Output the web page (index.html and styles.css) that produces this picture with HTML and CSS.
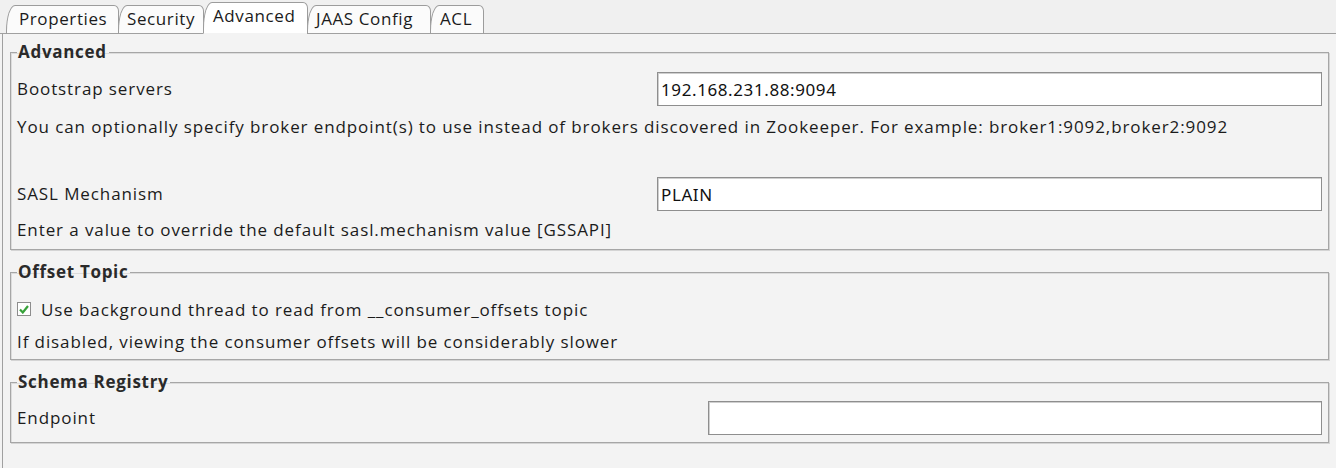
FILE: index.html
```html
<!DOCTYPE html>
<html>
<head>
<meta charset="utf-8">
<link rel="stylesheet" href="styles.css">
</head>
<body>
<div class="window">
  <div class="tabs">
    <div class="tab tab-properties">Properties</div>
    <div class="tab tab-security">Security</div>
    <div class="tab tab-advanced selected">Advanced</div>
    <div class="tab tab-jaas">JAAS Config</div>
    <div class="tab tab-acl">ACL</div>
  </div>
  <div class="panel">
    <fieldset class="group group-advanced">
      <legend>Advanced</legend>
      <div class="field-row row-bootstrap">
        <span class="label">Bootstrap servers</span>
        <div class="input input-wide">192.168.231.88:9094</div>
      </div>
      <div class="help help-bootstrap">You can optionally specify broker endpoint(s) to use instead of brokers discovered in Zookeeper. For example: broker1:9092,broker2:9092</div>
      <div class="field-row row-sasl">
        <span class="label">SASL Mechanism</span>
        <div class="input input-wide">PLAIN</div>
      </div>
      <div class="help help-sasl">Enter a value to override the default sasl.mechanism value [GSSAPI]</div>
    </fieldset>
    <fieldset class="group group-offset">
      <legend>Offset Topic</legend>
      <div class="check-row">
        <span class="checkbox"><svg width="10" height="9" viewBox="0 0 10 9"><path d="M1 4.5 L3.8 7.5 L9 1" fill="none" stroke="#37a23a" stroke-width="2.2"/></svg></span>
        <span class="check-label">Use background thread to read from __consumer_offsets topic</span>
      </div>
      <div class="help help-offset">If disabled, viewing the consumer offsets will be considerably slower</div>
    </fieldset>
    <fieldset class="group group-schema">
      <legend>Schema Registry</legend>
      <div class="field-row row-endpoint">
        <span class="label">Endpoint</span>
        <div class="input input-endpoint"></div>
      </div>
    </fieldset>
  </div>
</div>
</body>
</html>
```

FILE: styles.css
```css
* { box-sizing: border-box; }
html, body {
  margin: 0;
  padding: 0;
  background: #f3f3f3;
}
body {
  width: 1336px;
  height: 468px;
  overflow: hidden;
  font-family: "Open Sans", "Noto Sans", sans-serif;
  font-size: 17px;
  letter-spacing: 0.9px;
  color: #1b1b1b;
}
.window {
  display: flex;
  flex-direction: column;
  height: 468px;
}
.tabs {
  height: 34px;
  display: flex;
  align-items: flex-end;
  padding-left: 6px;
  border-bottom: 1px solid #a0a0a0;
  background: #f0f0f0;
}
.tab {
  height: 29px;
  margin-bottom: -1px;
  padding: 0 8px 2px 12px;
  display: flex;
  align-items: center;
  border: 1px solid #9c9c9c;
  border-bottom: 1px solid #a0a0a0;
  border-radius: 9px 5px 0 0 / 26px 6px 0 0;
  background: #fbfbfb;
  line-height: 20px;
  letter-spacing: 0.6px;
  white-space: nowrap;
}
.tab + .tab { margin-left: -1px; }
.tab.selected {
  height: 32px;
  background: #ffffff;
  border-bottom-color: #f3f3f3;
  padding-bottom: 4px;
}
.tab-properties { width: 113px; }
.tab-security { width: 86px; padding-left: 8px; }
.tab-advanced { width: 105px; padding-left: 9px; }
.tab-jaas { width: 124px; padding-left: 8px; }
.tab-acl { width: 54px; padding-left: 9px; }

.panel {
  flex: 1;
  border-left: 1px solid #a0a0a0;
  margin-left: 2px;
  padding: 9px 7px 0 7px;
  display: flex;
  flex-direction: column;
}
.group {
  margin: 0;
  border: 1px solid #a6a6a6;
  box-shadow: inset 1px 1px 0 #dcdcdc, 1px 1px 0 #d4d4d4;
  padding: 0 6px;
  min-width: 0;
}
.group + .group { margin-top: 13px; }
.group legend {
  font-weight: bold;
  padding: 0 2px 0 1px;
  margin-left: 0;
  line-height: 18px;
  letter-spacing: 0.7px;
  color: #2a2a2a;
}
.field-row {
  display: flex;
  align-items: center;
  justify-content: space-between;
}
.label { line-height: 20px; }
.input {
  height: 34px;
  background: #ffffff;
  border: 1px solid #8e8e8e;
  box-shadow: inset 1px 1px 0 #cfcfcf;
  font-family: "Noto Sans", "Open Sans", sans-serif;
  font-size: 17px;
  letter-spacing: 0.6px;
  padding: 0 3px;
  display: flex;
  align-items: center;
  color: #111;
}
.input-wide { width: 665px; }
.input-endpoint { width: 614px; }
.help { line-height: 18px; white-space: nowrap; }

.row-bootstrap { margin-top: 11px; }
.help-bootstrap { margin-top: 12px; }
.row-sasl { margin-top: 41px; }
.help-sasl { margin-top: 10px; margin-bottom: 10px; }

.check-row {
  display: flex;
  align-items: center;
  height: 20px;
  margin-top: 18px;
}
.checkbox {
  width: 14px;
  height: 14px;
  border: 1px solid #8d8d8d;
  background: #ffffff;
  display: flex;
  align-items: center;
  justify-content: center;
  margin-right: 10px;
}
.help-offset { margin-top: 14px; margin-bottom: 8px; }

.row-endpoint { margin-top: 10px; margin-bottom: 7px; }
```
